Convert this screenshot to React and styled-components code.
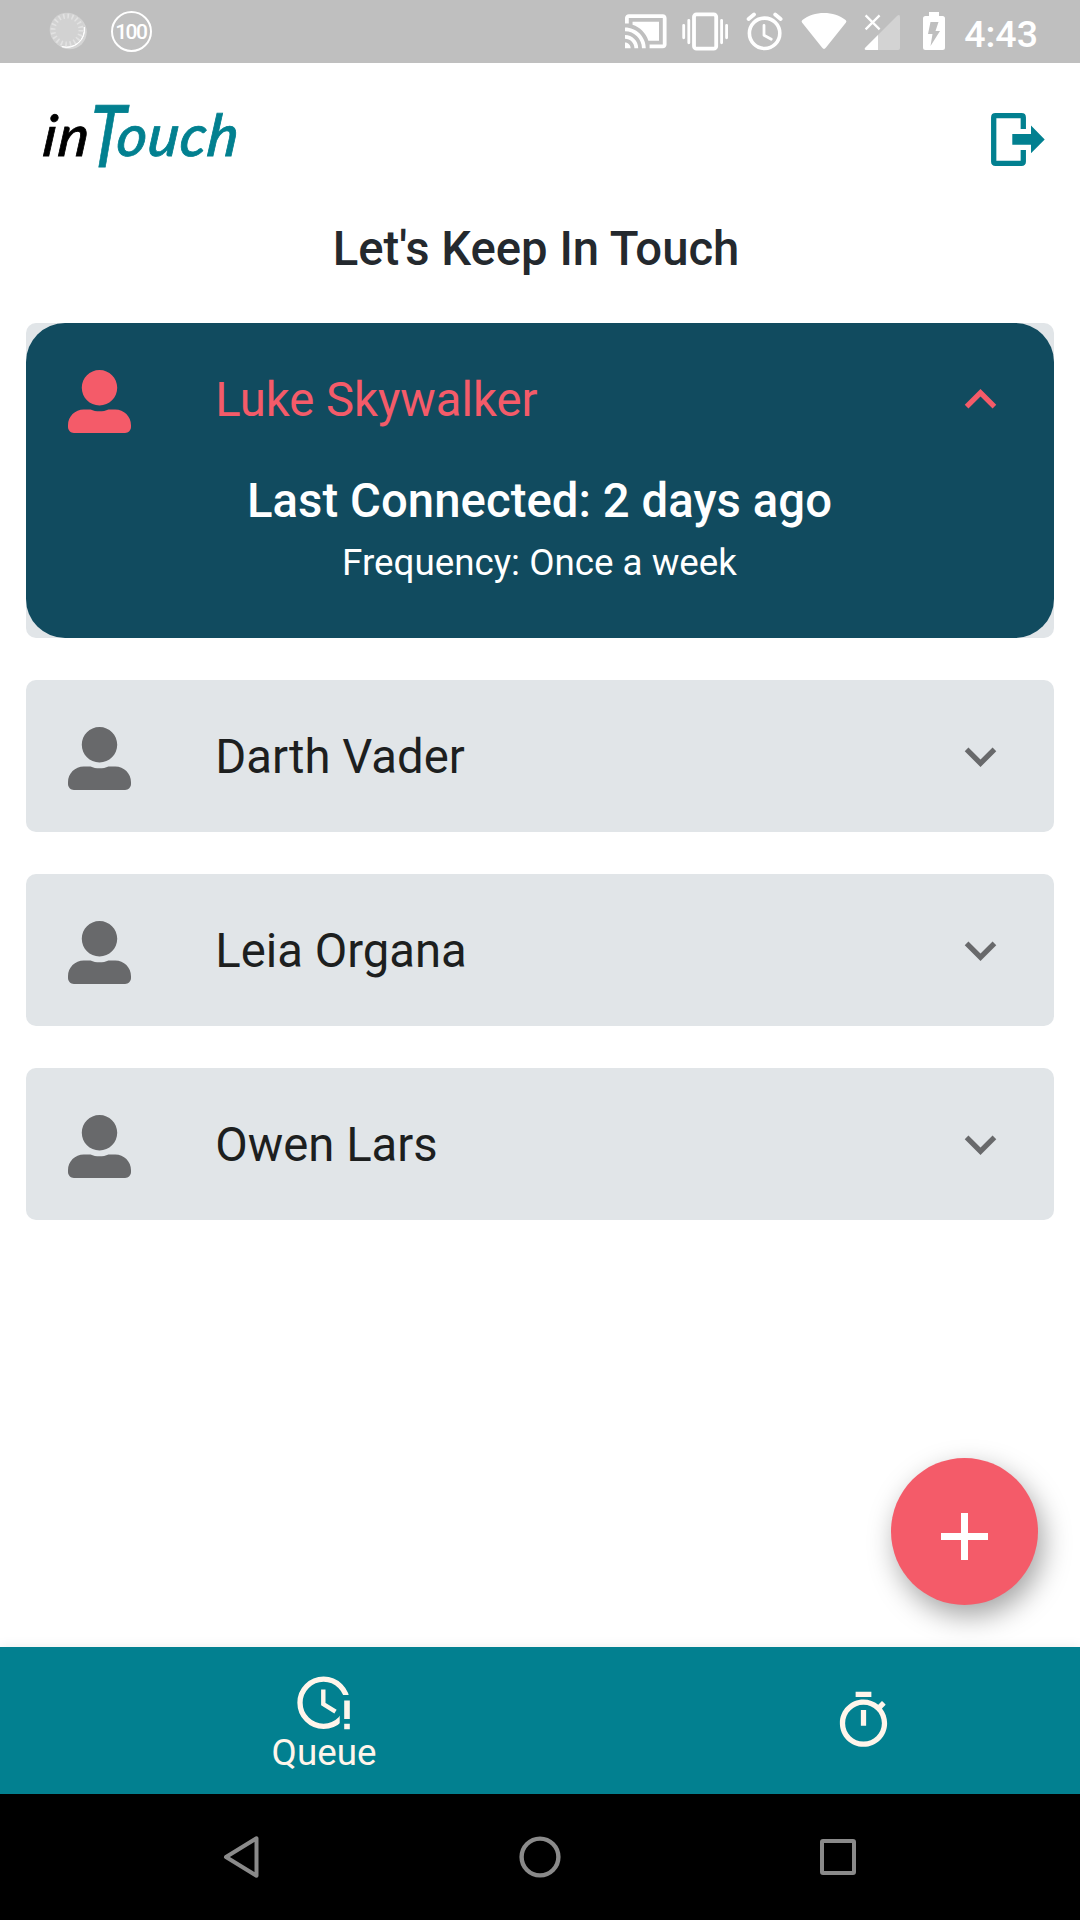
import React, { useState } from "react";
import styled, { createGlobalStyle } from "styled-components";

const GlobalStyle = createGlobalStyle`
  *, *::before, *::after { box-sizing: border-box; }
  body { margin: 0; background: #fff; }
  button { border: 0; margin: 0; padding: 0; background: none; font: inherit; color: inherit; cursor: pointer; }
  svg { display: block; flex: none; }
`;

const Screen = styled.div`
  width: 1080px;
  height: 1920px;
  display: flex;
  flex-direction: column;
  background: #fff;
  font-family: Roboto, "Liberation Sans", sans-serif;
  overflow: hidden;
`;

const StatusBar = styled.div`
  flex: none;
  height: 63px;
  display: flex;
  justify-content: space-between;
  background: #bfbfbf;
  color: #fff;
`;

const StatusLeft = styled.div`
  display: flex;
  gap: 23px;
  padding-left: 49px;
`;

const StatusRight = styled.div`
  display: flex;
  padding-right: 42px;
`;

const StatusIcon = styled.svg`
  height: 63px;
  width: ${(p) => p.$w}px;
  margin-right: ${(p) => p.$after}px;
`;

const Battery100 = styled.div`
  width: 41px;
  height: 41px;
  margin-top: 11px;
  border: 2.5px solid #fff;
  border-radius: 50%;
  display: flex;
  align-items: center;
  justify-content: center;
  font-size: 21px;
  font-weight: 500;
  letter-spacing: -1.6px;
  padding: 1px 1.5px 0 0;
`;

const Clock = styled.div`
  font-size: 37.5px;
  font-weight: 500;
  line-height: 63px;
  padding-top: 3px;
`;

const Header = styled.header`
  flex: none;
  height: 140px;
  display: flex;
  justify-content: space-between;
  padding: 42px 35.5px 0 42px;
`;

const Logo = styled.div`
  display: flex;
  align-items: baseline;
  height: 65px;
  font-family: Lato, "Open Sans", sans-serif;
  font-style: italic;
  font-weight: 500;
  line-height: 65px;
  margin-top: -15px;
  -webkit-text-stroke: 0.8px currentColor;
`;

const LogoPart = styled.span`
  display: inline-block;
  width: ${(p) => p.$w}px;
  white-space: nowrap;
  font-size: ${(p) => p.$size}px;
  letter-spacing: ${(p) => p.$track || 0}px;
  color: ${(p) => p.$color};
  transform-origin: 0 75%;
  transform: translateY(${(p) => p.$drop || 0}px) scaleX(${(p) => p.$stretch || 1}) skewX(-6deg);
`;

const LogoutButton = styled.button`
  height: 53px;
  margin-top: 8px;
`;

const Title = styled.h1`
  flex: none;
  margin: 0;
  padding: 18px 8px 0 0;
  height: 120px;
  text-align: center;
  font-size: 47.25px;
  font-weight: 500;
  line-height: 57px;
  color: #24292e;
`;

const List = styled.main`
  flex: 1;
  display: flex;
  flex-direction: column;
  gap: 42px;
  padding: 0 26.25px;
`;

const Card = styled.section`
  border-radius: 10px;
  background: #e1e5e8;
`;

const CardInner = styled.div`
  height: ${(p) => (p.$open ? 315 : 152)}px;
  border-radius: ${(p) => (p.$open ? 39 : 10)}px;
  background: ${(p) => (p.$open ? "#114b5f" : "transparent")};
`;

const CardHead = styled.button`
  width: 100%;
  height: 152px;
  display: flex;
  align-items: center;
  padding: 5px 42px 0 42px;
  color: ${(p) => (p.$open ? "#f45b69" : "#68696b")};
`;

const Name = styled.span`
  flex: 1;
  margin-left: 84px;
  padding-bottom: 3px;
  text-align: left;
  font-size: 47.25px;
  line-height: 60px;
  color: ${(p) => (p.$open ? "#f45b69" : "#1d1f1f")};
`;

const Chevron = styled.svg`
  width: 63px;
  height: 63px;
  margin-bottom: 5px;
`;

const Details = styled.div`
  display: flex;
  flex-direction: column;
  align-items: center;
  margin-top: -2px;
  padding-right: 1px;
  color: #fff;
`;

const LastConnected = styled.div`
  font-size: 47.25px;
  font-weight: 500;
  line-height: 56px;
  letter-spacing: 0.06px;
`;

const Frequency = styled.div`
  margin-top: 12px;
  font-size: 36.75px;
  line-height: 44px;
`;

const FabRow = styled.div`
  flex: none;
  height: 189px;
  display: flex;
  justify-content: flex-end;
  padding-right: 42px;
`;

const Fab = styled.button`
  width: 147px;
  height: 147px;
  border-radius: 50%;
  background: #f45b69;
  display: flex;
  align-items: center;
  justify-content: center;
  padding-top: 9px;
  box-shadow: 5px 11px 28px rgba(0, 0, 0, 0.36);
`;

const TabBar = styled.nav`
  flex: none;
  position: relative;
  height: 147px;
  display: flex;
  background: #028090;
  color: #fff5eb;
  box-shadow: 0 0 12px rgba(0, 0, 0, 0.08);
`;

const Tab = styled.button`
  width: ${(p) => p.$w}px;
  display: flex;
  flex-direction: column;
  align-items: center;
  padding-top: ${(p) => p.$top}px;
  font-size: 36.75px;
  line-height: 46px;
`;

const SystemNav = styled.div`
  flex: none;
  height: 126px;
  display: flex;
  align-items: center;
  justify-content: space-between;
  padding: 0 223px 0 222px;
  background: #000;
`;

const people = ["Luke Skywalker", "Darth Vader", "Leia Organa", "Owen Lars"];

function PersonIcon() {
  return (
    <svg width="63" height="63" viewBox="0 0 512 512" fill="currentColor">
      <path d="M256 288c79.5 0 144-64.5 144-144S335.5 0 256 0 112 64.5 112 144s64.5 144 144 144zm128 32h-55.1c-22.2 10.2-46.9 16-72.9 16s-50.6-5.8-72.9-16H128C57.3 320 0 377.3 0 448v16c0 26.5 21.5 48 48 48h416c26.5 0 48-21.5 48-48v-16c0-70.7-57.3-128-128-128z" />
    </svg>
  );
}

function ContactCard({ name, open, onToggle }) {
  return (
    <Card>
      <CardInner $open={open}>
        <CardHead $open={open} onClick={onToggle}>
          <PersonIcon />
          <Name $open={open}>{name}</Name>
          <Chevron viewBox="0 0 24 24" fill="currentColor">
            <path
              d={
                open
                  ? "M12 8l-6 6 1.41 1.41L12 10.83l4.59 4.58L18 14z"
                  : "M16.59 8.59L12 13.17 7.41 8.59 6 10l6 6 6-6z"
              }
            />
          </Chevron>
        </CardHead>
        {open && (
          <Details>
            <LastConnected>Last Connected: 2 days ago</LastConnected>
            <Frequency>Frequency: Once a week</Frequency>
          </Details>
        )}
      </CardInner>
    </Card>
  );
}

export default function App() {
  const [openName, setOpenName] = useState(people[0]);
  return (
    <>
      <GlobalStyle />
      <Screen>
        <StatusBar>
          <StatusLeft>
            <StatusIcon viewBox="49 0 39 63" $w={39} $after={0}>
              <circle cx="69.5" cy="32" r="17.3" fill="#fff" opacity=".35" />
              <circle cx="67" cy="30" r="17.3" fill="#d2d2d2" />
              <circle cx="67" cy="30" r="14" fill="none" stroke="#e2e2e2" strokeWidth="5" strokeDasharray="1.6 2.8" />
              <path d="M84.3 27a17.6 17.6 0 0 1-22.5 19.6a18 18 0 0 0 22.5-19.6z" fill="#fff" stroke="#fff" strokeWidth="1" />
            </StatusIcon>
            <Battery100>100</Battery100>
          </StatusLeft>
          <StatusRight>
            <StatusIcon viewBox="625 0 42 63" $w={42} $after={15}>
              <path
                transform="translate(623.1 8.5) scale(1.89)"
                fill="#fff"
                d="M1 18v3h3c0-1.66-1.34-3-3-3zm0-4v2c2.76 0 5 2.24 5 5h2c0-3.87-3.13-7-7-7zm18-7H5v1.63c3.96 1.28 7.09 4.41 8.37 8.37H19V7zM1 10v2c4.97 0 9 4.03 9 9h2c0-6.08-4.93-11-11-11zm20-7H3c-1.1 0-2 .9-2 2v3h2V5h18v14h-7v2h7c1.1 0 2-.9 2-2V5c0-1.1-.9-2-2-2z"
              />
            </StatusIcon>
            <StatusIcon viewBox="682 0 46 63" $w={46} $after={18}>
              <rect x="694" y="14.3" width="22.2" height="34.4" rx="2.5" fill="none" stroke="#fff" strokeWidth="3.8" />
              <path d="M683.7 25.3v12.5M688.8 20.3v22.5M721.6 20.3v22.5M726.6 25.3v12.5" stroke="#fff" strokeWidth="2.8" strokeLinecap="round" />
            </StatusIcon>
            <StatusIcon viewBox="746 0 37 63" $w={37} $after={18}>
              <g fill="none" stroke="#fff" strokeLinecap="round" strokeLinejoin="round">
                <circle cx="764.6" cy="33.3" r="15.2" strokeWidth="3.6" />
                <path d="M764 25.5v9.7l7.3 4" strokeWidth="2.8" />
                <path d="M748.6 19l5.4-4.5M780.6 19l-5.4-4.5" strokeWidth="3.8" />
              </g>
            </StatusIcon>
            <StatusIcon viewBox="801 0 46 63" $w={46} $after={17}>
              <path d="M824 49q-1 0-2-1.4L802 22.600q-1-1.500.4-2.600C808 15.500 816 13 824 13s16 2.500 21.600 7q1.400 1.100.4 2.600L826 47.600Q825 49 824 49z" fill="#fff" />
            </StatusIcon>
            <StatusIcon viewBox="864 0 36 63" $w={36} $after={23}>
              <path d="M865.500 47.500L897 16q3-2.300 3 1.200V48q0 2-2 2H866.500q-3-.2-1-2.500z" fill="#d3d3d3" />
              <path d="M865.500 47.500L878 35v15h-11.500q-3-.2-1-2.500z" fill="#fff" />
              <path d="M865.600 15.400l14 14M879.600 15.400l-14 14" stroke="#fff" strokeWidth="2.300" />
            </StatusIcon>
            <StatusIcon viewBox="923 0 22 63" $w={22} $after={19}>
              <path fillRule="evenodd" fill="#fff" d="M929 12h10v4h3.500q2.500 0 2.500 2.500v29q0 2.500-2.500 2.500h-17q-2.500 0-2.500-2.500v-29q0-2.500 2.500-2.500H929zM930.500 22L928 34h4.500L930.500 46L940 31h-4.500l3-9z" />
            </StatusIcon>
            <Clock>4:43</Clock>
          </StatusRight>
        </StatusBar>

        <Header>
          <Logo>
            <LogoPart $size={57} $w={46} $track={2} $color="#000">in</LogoPart>
            <LogoPart $size={86} $w={28} $color="#028090" $drop={11} $stretch={0.75}>T</LogoPart>
            <LogoPart $size={58} $w={120} $track={1} $color="#028090">ouch</LogoPart>
          </Logo>
          <LogoutButton aria-label="Log out">
            <svg width="54" height="53" viewBox="0 0 54 53">
              <path d="M32.300 16V4.500q0-1.800-1.800-1.800H4.500q-1.800 0-1.800 1.800v44q0 1.800 1.800 1.800h26q1.800 0 1.800-1.800V37" fill="none" stroke="#028090" strokeWidth="5.300" />
              <path d="M21.300 21H40v-8.500L53.700 26.500L40 40.200V31.800H21.300z" fill="#028090" />
            </svg>
          </LogoutButton>
        </Header>

        <Title>Let's Keep In Touch</Title>

        <List>
          {people.map((name) => (
            <ContactCard
              key={name}
              name={name}
              open={name === openName}
              onToggle={() => setOpenName(name === openName ? null : name)}
            />
          ))}
        </List>

        <FabRow>
          <Fab aria-label="Add contact">
            <svg width="47" height="47" viewBox="0 0 47 47">
              <path d="M23.500 0v47M0 23.500h47" stroke="#fff" strokeWidth="7" />
            </svg>
          </Fab>
        </FabRow>

        <TabBar>
          <Tab $w={648} $top={28.5}>
            <svg width="54" height="54" viewBox="297 1675.500 54 54" fill="none" stroke="currentColor">
              <defs>
                <clipPath id="dial-gap">
                  <path d="M290 1670h65v24.500h-15.300V1735H290z" />
                </clipPath>
              </defs>
              <circle cx="323.600" cy="1702.300" r="23.600" strokeWidth="5.300" clipPath="url(#dial-gap)" />
              <path d="M323.300 1689v14.500l12.200 7.600" strokeWidth="4.400" />
              <path d="M347 1700v18.500M347 1723.200v5.500" strokeWidth="5.600" />
            </svg>
            Queue
          </Tab>
          <Tab $w={431} $top={42} aria-label="Timer">
            <svg width="63" height="63" viewBox="0 0 24 24" fill="currentColor">
              <path d="M15 1H9v2h6V1zm-4 13h2V8h-2v6zm8.030-6.610l1.420-1.420c-.43-.51-.9-.99-1.410-1.410l-1.420 1.420C16.070 4.740 14.120 4 12 4c-4.970 0-9 4.030-9 9s4.020 9 9 9 9-4.030 9-9c0-2.120-.74-4.070-1.970-5.610zM12 20c-3.870 0-7-3.130-7-7s3.130-7 7-7 7 3.130 7 7-3.130 7-7 7z" />
            </svg>
          </Tab>
        </TabBar>

        <SystemNav>
          <svg width="38" height="44" viewBox="222 1835 38 44" fill="none" stroke="#8a8a8a" strokeWidth="4" strokeLinejoin="round">
            <path d="M256.500 1838.300v37.400L226 1857z" />
          </svg>
          <svg width="42" height="42" viewBox="0 0 42 42" fill="none" stroke="#8a8a8a" strokeWidth="4.400">
            <circle cx="21" cy="21" r="18.400" />
          </svg>
          <svg width="38" height="38" viewBox="0 0 38 38" fill="none" stroke="#8a8a8a" strokeWidth="4">
            <rect x="3" y="3" width="32" height="32" rx="1" />
          </svg>
        </SystemNav>
      </Screen>
    </>
  );
}
